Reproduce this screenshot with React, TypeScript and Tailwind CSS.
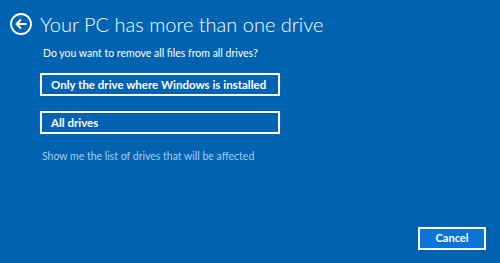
export default function App() {
  return (
    <div className="flex h-[263px] w-[500px] flex-col overflow-hidden bg-[#0063b1] text-white [font-family:Lato,sans-serif]">
      {/* Header */}
      <div className="flex items-center pl-[10px] pt-[13px]">
        <svg width="22" height="22" viewBox="0 0 22 22" fill="none" stroke="white" strokeWidth="1.8">
          <circle cx="11" cy="11" r="10" />
          <path d="M16 11H6.5M10.5 7L6.5 11L10.5 15" strokeLinecap="round" strokeLinejoin="round" />
        </svg>
        <h1 className="ml-[8px] text-[20px] font-light leading-[22px]">
          Your PC has more than one drive
        </h1>
      </div>

      <div className="flex flex-col pl-[40px]">
        <p className="mt-[10px] pl-[3px] text-[10.5px] leading-[16px]">
          Do you want to remove all files from all drives?
        </p>
        <button className="mt-[12px] flex h-[23px] w-[240px] items-center whitespace-nowrap border-2 border-white pl-[9px] text-[11.5px] font-bold">
          Only the drive where Windows is installed
        </button>
        <button className="mt-[15px] flex h-[23px] w-[240px] items-center border-2 border-white pl-[9px] text-[11.5px] font-bold">
          All drives
        </button>
        <a className="mt-[14px] pl-[2px] text-[10.5px] leading-[16px] text-[#a9cbec]">
          Show me the list of drives that will be affected
        </a>
      </div>

      <div className="mt-auto flex justify-end pb-[13px] pr-[14px]">
        <button className="flex h-[23px] w-[68px] items-center justify-center border-2 border-white bg-[#0a74d4] text-[11px] font-bold">
          Cancel
        </button>
      </div>
    </div>
  )
}
